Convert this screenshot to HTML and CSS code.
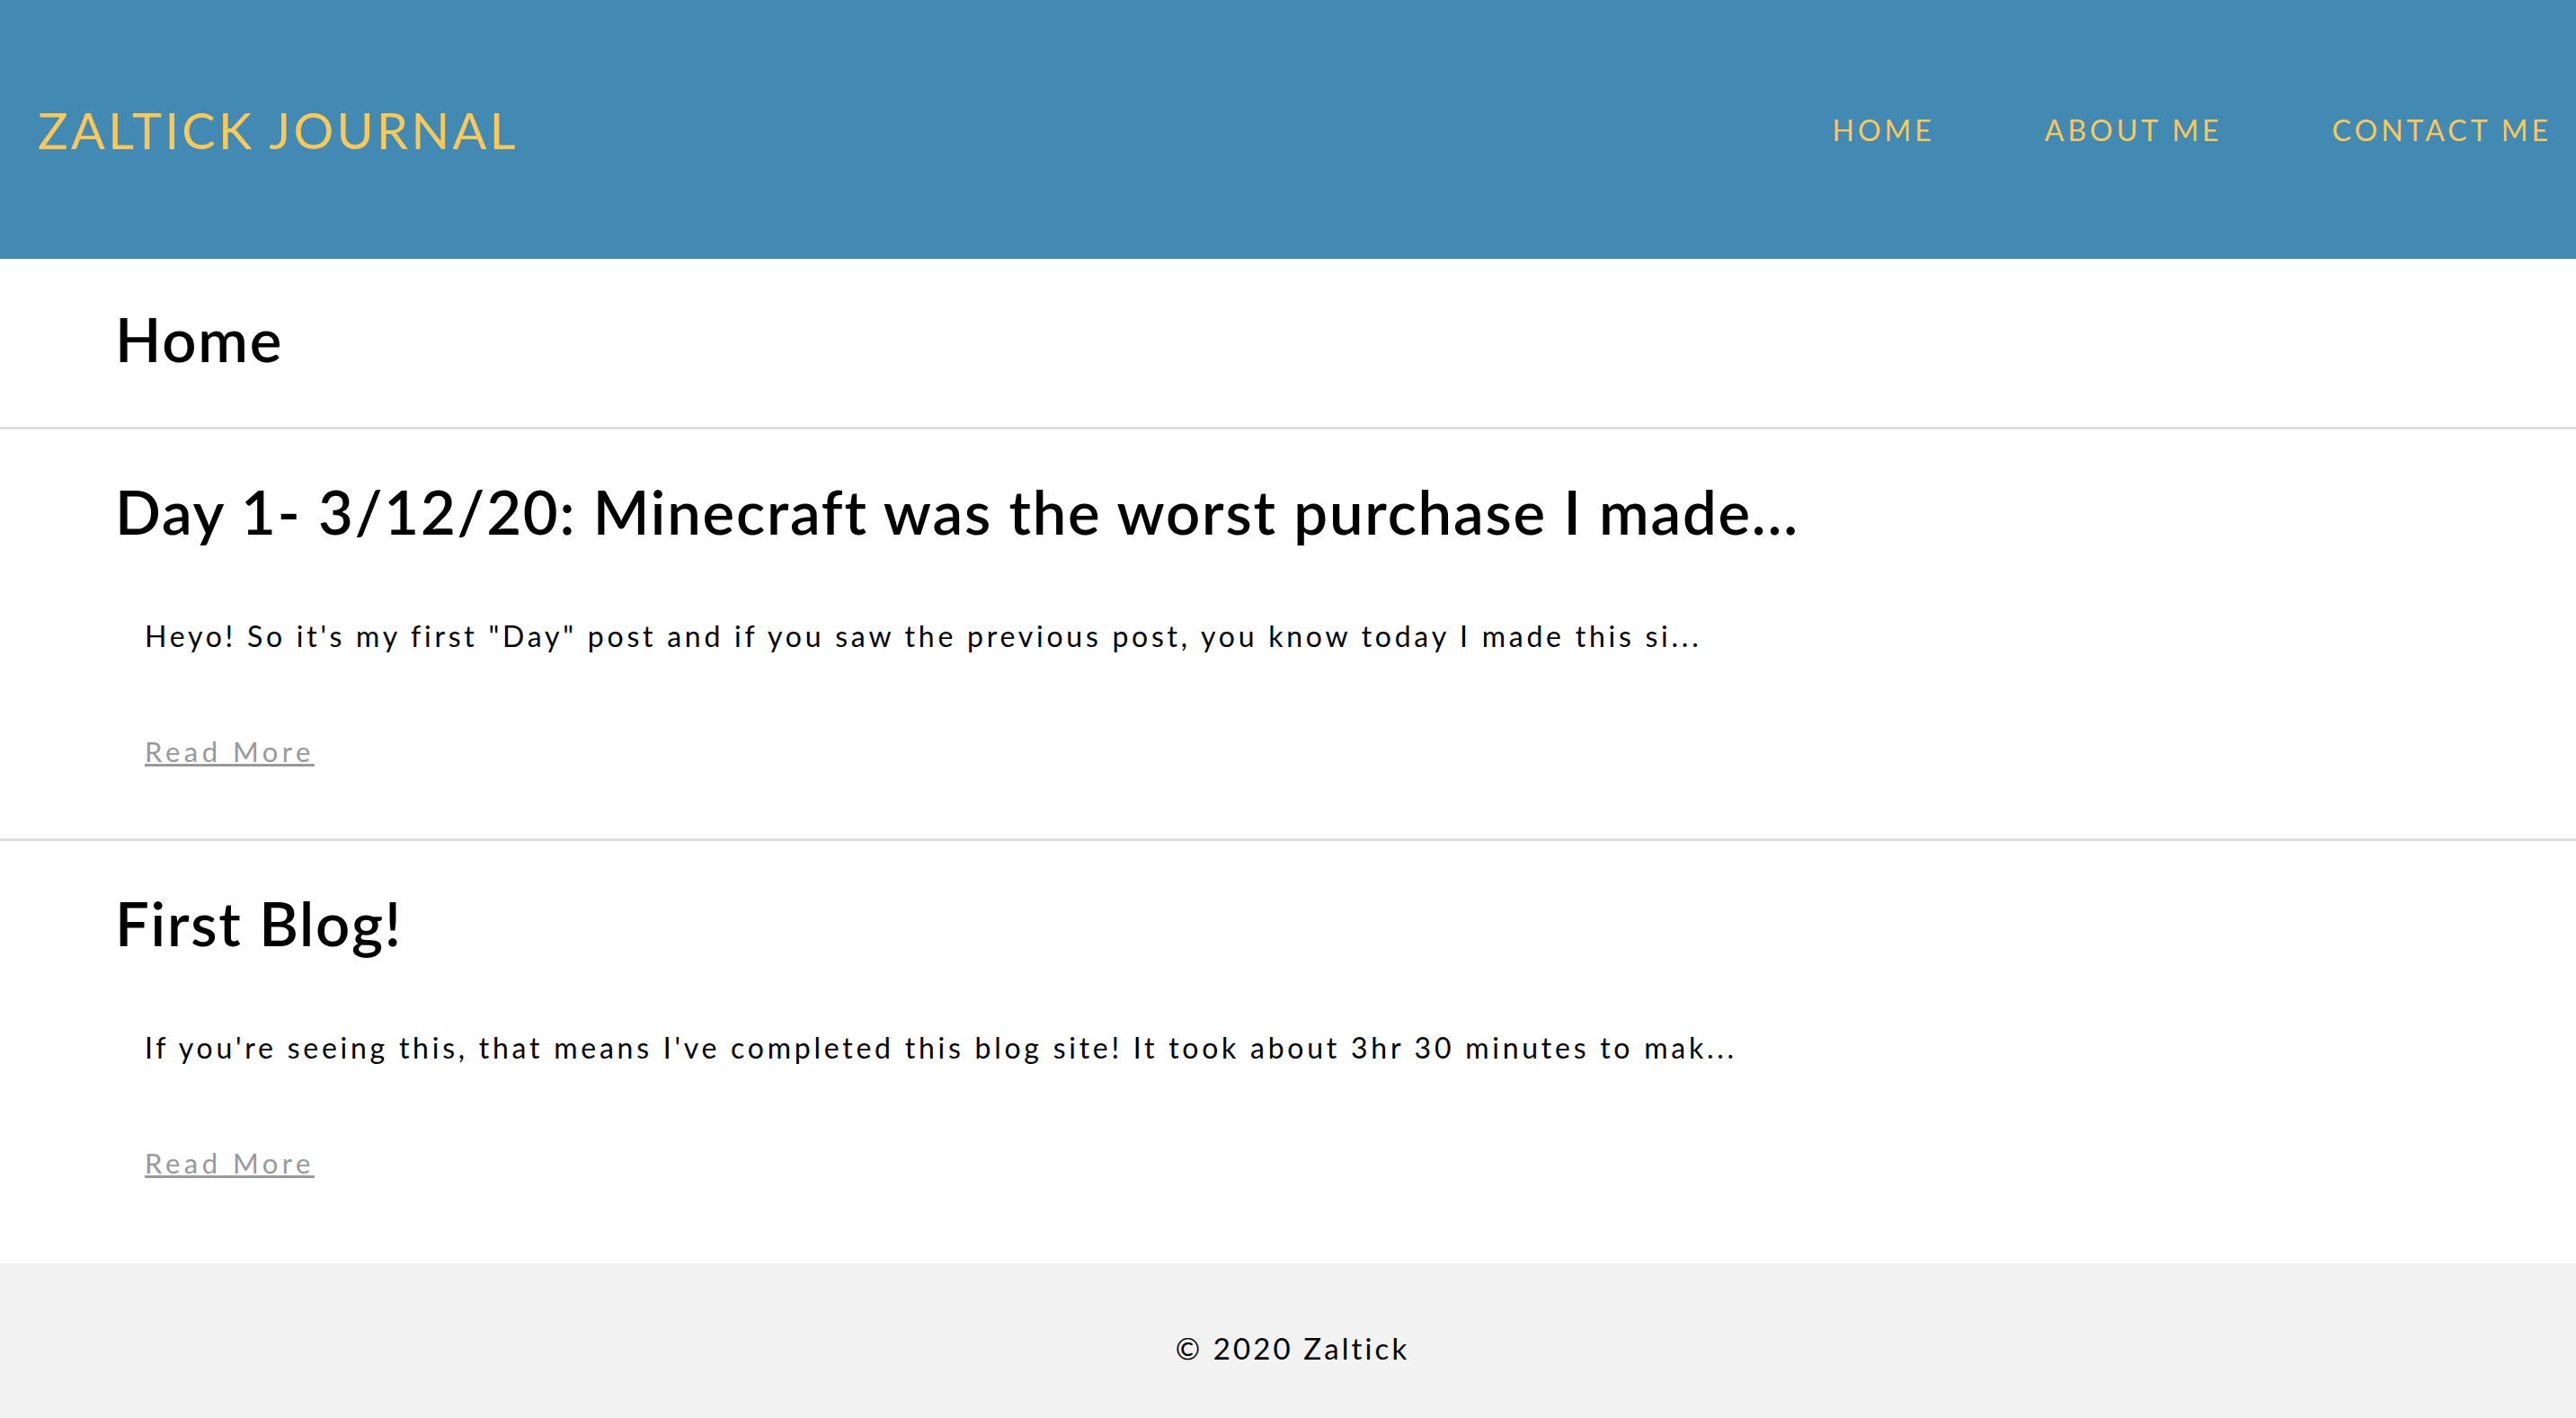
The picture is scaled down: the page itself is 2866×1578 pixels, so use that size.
FILE: index.html
```html
<!DOCTYPE html>
<html lang="en">
<head>
<meta charset="utf-8">
<title>Zaltick Journal</title>
<link rel="stylesheet" href="styles.css">
</head>
<body>
<header class="site-header">
  <div class="logo">ZALTICK JOURNAL</div>
  <nav class="nav">
    <a class="nav-link" href="#">HOME</a>
    <a class="nav-link" href="#">ABOUT ME</a>
    <a class="nav-link" href="#">CONTACT ME</a>
  </nav>
</header>
<main>
  <section class="page-title">
    <h1 class="heading">Home</h1>
  </section>
  <article class="post">
    <h2 class="heading">Day 1- 3/12/20: Minecraft was the worst purchase I made...</h2>
    <p class="excerpt">Heyo! So it's my first "Day" post and if you saw the previous post, you know today I made this si...</p>
    <a class="read-more" href="#">Read More</a>
  </article>
  <article class="post last">
    <h2 class="heading">First Blog!</h2>
    <p class="excerpt">If you're seeing this, that means I've completed this blog site! It took about 3hr 30 minutes to mak...</p>
    <a class="read-more" href="#">Read More</a>
  </article>
</main>
<footer class="site-footer">© 2020 Zaltick</footer>
</body>
</html>
```
FILE: styles.css
```css
* { box-sizing: border-box; }
body {
  margin: 0;
  font-family: Lato, "Open Sans", sans-serif;
  color: #000;
  background: #fff;
}
.site-header {
  height: 288px;
  background: #4289b4;
  display: flex;
  align-items: center;
  justify-content: space-between;
  padding: 0 27px 0 42px;
}
.logo {
  font-size: 56px;
  color: #f9c85b;
  letter-spacing: 3.3px;
}
.nav {
  display: flex;
  gap: 122px;
}
.nav-link {
  font-size: 32px;
  color: #f9c85b;
  text-decoration: none;
  letter-spacing: 4px;
}
.page-title {
  padding: 49px 0 58px 128px;
  border-bottom: 3px solid #ddd;
}
.heading {
  margin: 0;
  font-size: 67px;
  line-height: 80px;
  font-weight: 600;
  letter-spacing: 1.8px;
}
.post {
  padding: 51px 0 77px 128px;
  border-bottom: 3px solid #ddd;
}
.post.last {
  border-bottom: none;
  padding-bottom: 92px;
}
.excerpt {
  margin: 79px 0 0 33px;
  font-size: 32px;
  line-height: 40px;
  letter-spacing: 3.75px;
}
.read-more {
  display: inline-block;
  margin: 88px 0 0 33px;
  font-size: 31px;
  line-height: 40px;
  color: #999;
  letter-spacing: 4.5px;
}
.site-footer {
  background: #f2f2f2;
  height: 172px;
  display: flex;
  align-items: center;
  justify-content: center;
  font-size: 33px;
  letter-spacing: 3.1px;
  padding: 16px 0 0 10px;
}
```
